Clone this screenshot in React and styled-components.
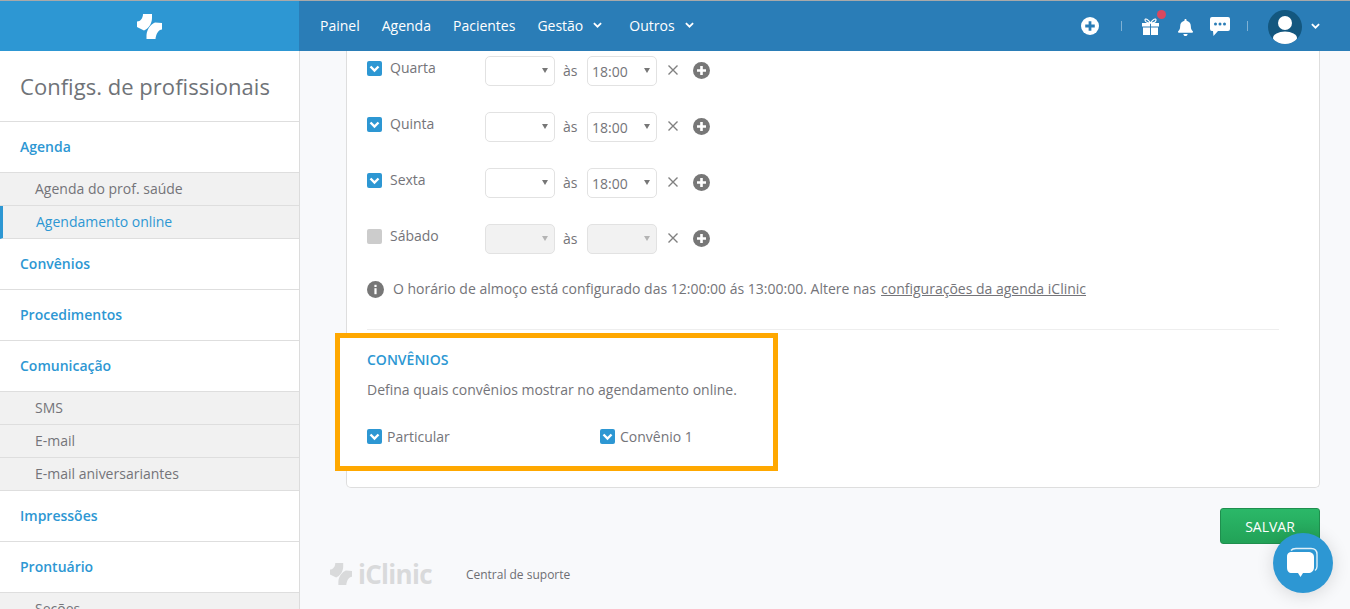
import React from "react";
import styled, { createGlobalStyle } from "styled-components";
import { FaBell } from "react-icons/fa";

const GlobalStyle = createGlobalStyle`
  html, body {
    margin: 0;
    padding: 0;
    height: 100%;
    overflow: hidden;
    background: #f8f9fb;
    font-family: "Open Sans", "Liberation Sans", sans-serif;
    color: #747479;
  }
  * {
    box-sizing: border-box;
  }
`;

const Page = styled.div`
  display: flex;
  flex-direction: column;
  height: 609px;
  overflow: hidden;
`;

const Header = styled.header`
  display: flex;
  flex: none;
  height: 51px;
  border-top: 1px solid #a9a9a9;
  background: #2a7db7;
`;

const Brand = styled.div`
  display: flex;
  align-items: center;
  justify-content: center;
  width: 299px;
  background: #2d97d3;
`;

const Nav = styled.nav`
  display: flex;
  align-items: center;
  gap: 22px;
  flex: 1;
  padding: 0 0 2px 21px;
`;

const NavItem = styled.a`
  display: flex;
  align-items: center;
  gap: 10px;
  color: #fff;
  font-size: 14px;
  margin-right: ${(props) => (props.$menu ? "5px" : "0")};
`;

const Tools = styled.div`
  display: flex;
  align-items: center;
  padding-right: 30px;
`;

const Sep = styled.span`
  width: 1px;
  height: 10px;
  background: rgba(255, 255, 255, 0.4);
  margin: ${(props) => props.$space};
`;

const GiftWrap = styled.span`
  position: relative;
  display: flex;
`;

const Dot = styled.span`
  position: absolute;
  top: -8px;
  right: -6.5px;
  width: 9px;
  height: 9px;
  border-radius: 50%;
  background: #d9485f;
`;

const BellWrap = styled.span`
  display: flex;
  margin: 2px 16px 0 18px;
`;

const Avatar = styled.span`
  display: flex;
  width: 34px;
  height: 34px;
  margin: 2px 9px 0 20px;
`;

const Body = styled.div`
  display: flex;
  flex: 1;
  min-height: 0;
`;

const Sidebar = styled.aside`
  flex: none;
  width: 300px;
  background: #fff;
  border-right: 1px solid #dcdcdc;
  overflow: hidden;
`;

const SideTitle = styled.h1`
  margin: 0;
  height: 71px;
  padding: 20px 20px 0;
  font-size: 22px;
  line-height: 30px;
  font-weight: 400;
  letter-spacing: 0.03px;
  color: #6f7378;
  border-bottom: 1px solid #dedede;
`;

const SideGroup = styled.div`
  display: flex;
  align-items: center;
  height: 51px;
  padding-left: 20px;
  padding-bottom: 1px;
  font-size: 14px;
  font-weight: 600;
  color: #2d97d3;
  border-bottom: 1px solid #dedede;
`;

const SideItem = styled.div`
  display: flex;
  align-items: center;
  height: 33px;
  padding-left: ${(props) => (props.$active ? "33px" : "35px")};
  padding-bottom: 2px;
  font-size: 14px;
  color: ${(props) => (props.$active ? "#2d97d3" : "#747479")};
  background: #f1f1f1;
  border-bottom: 1px solid #dedede;
  border-left: ${(props) => (props.$active ? "3px solid #2d97d3" : "0")};
`;

const Main = styled.main`
  flex: 1;
  min-width: 0;
  padding: 0 30px 0 46px;
  background: #f8f9fb;
`;

const Card = styled.section`
  height: 437px;
  padding: 5px 40px 0 20px;
  background: #fff;
  border: 1px solid #dedede;
  border-top: 0;
  border-radius: 0 0 5px 5px;
`;

const DayRow = styled.div`
  display: flex;
  align-items: flex-start;
  height: 56px;
`;

const DayCheck = styled.label`
  display: flex;
  align-items: center;
  gap: 8px;
  width: 118px;
  height: 22px;
  font-size: 14px;
`;

const Box = styled.span`
  display: flex;
  align-items: center;
  justify-content: center;
  flex: none;
  width: 15px;
  height: 15px;
  margin-top: ${(props) => props.$nudge || "0"};
  border-radius: 2px;
  background: ${(props) => (props.$off ? "#cccccc" : "#2d97d3")};
`;

const Select = styled.div`
  display: flex;
  align-items: center;
  justify-content: space-between;
  width: 70px;
  height: 30px;
  padding: 0 6px 0 4px;
  font-size: 14px;
  border: 1px solid #e2e2e2;
  border-radius: 5px;
  background: ${(props) => (props.$off ? "#f2f2f2" : "#fff")};
  color: #747479;

  &::after {
    content: "";
    margin-top: -1px;
    margin-left: auto;
    border-top: 5px solid ${(props) => (props.$off ? "#b4b4b4" : "#777")};
    border-left: 3px solid transparent;
    border-right: 3px solid transparent;
  }
`;

const As = styled.span`
  width: 32px;
  height: 30px;
  padding-left: 8px;
  line-height: 30px;
  font-size: 14px;
`;

const RowActions = styled.div`
  display: flex;
  align-items: center;
  gap: 14px;
  height: 28px;
  margin-left: 10px;
`;

const Note = styled.p`
  display: flex;
  align-items: center;
  gap: 9px;
  margin: -4px 0 0;
  height: 24px;
  font-size: 14px;
`;

const InfoIcon = styled.svg`
  flex: none;
  margin-top: 2px;
`;

const NoteLink = styled.a`
  margin-left: -4px;
  text-decoration: underline;
`;

const Divider = styled.hr`
  margin: 29px 0 0;
  border: 0;
  border-top: 1px solid #eeeeee;
`;

const Plans = styled.div`
  position: relative;
  padding-top: 20px;
`;

const Highlight = styled.div`
  position: absolute;
  top: 3px;
  left: -32px;
  width: 443px;
  height: 138px;
  background: #fff;
  border: 5px solid #ffa800;
`;

const PlansTitle = styled.h2`
  position: relative;
  margin: 0;
  font-size: 14px;
  line-height: 19px;
  font-weight: 600;
  color: #2d97d3;
`;

const PlansText = styled.p`
  position: relative;
  margin: 11px 0 0;
  font-size: 14px;
  line-height: 19px;
`;

const PlansGrid = styled.div`
  position: relative;
  display: grid;
  grid-template-columns: 233px 200px;
  margin-top: 28px;
`;

const PlanCheck = styled.label`
  display: flex;
  align-items: center;
  gap: 5px;
  font-size: 14px;
  line-height: 19px;
`;

const Actions = styled.div`
  display: flex;
  justify-content: flex-end;
  margin-top: 20px;
`;

const SaveButton = styled.button`
  width: 100px;
  height: 36px;
  padding: 0;
  font-family: inherit;
  font-size: 14px;
  color: #fff;
  background: linear-gradient(#2bb868, #22a257);
  border: 1px solid #1f8f4e;
  border-radius: 3px;
`;

const Footer = styled.footer`
  display: flex;
  align-items: center;
  gap: 34px;
  margin-top: 8px;
  margin-left: -16px;
  height: 44px;
`;

const FooterBrand = styled.span`
  display: flex;
  align-items: center;
  gap: 6px;
  font-size: 26px;
  font-weight: 700;
  letter-spacing: -0.7px;
  color: #d9dadb;
`;

const FooterLink = styled.a`
  font-size: 12px;
  color: #6e6e73;
`;

const ChatBubble = styled.button`
  position: fixed;
  left: 1273px;
  top: 533px;
  display: flex;
  align-items: center;
  justify-content: center;
  width: 60px;
  height: 60px;
  padding: 0;
  border: 0;
  border-radius: 50%;
  background: #2d97d3;
  box-shadow: 0 2px 18px rgba(0, 0, 0, 0.14);
`;

const Logo = ({ size, color }) => (
  <svg width={size} height={size} viewBox="0 0 25 25" fill={color}>
    <path d="M6 0H15V4C15 10 11 15 7 16.500L0 13V7.500C3.500 7.500 6 4 6 0Z" />
    <path d="M25 9V15.500C21.500 15.500 19 20 18.500 25H9.500V21C10 15 14 10 18 8.500Z" />
  </svg>
);

const Check = () => (
  <svg width="11" height="9" viewBox="0 0 11 9" fill="none">
    <path d="M1.500 2.500l4 4 4-4" stroke="#fff" strokeWidth="2.400" />
  </svg>
);

const Chevron = ({ size = 9 }) => (
  <svg width={size} height={size * 0.7} viewBox="0 0 10 7" fill="none">
    <path d="M1 1.200l4 4 4-4" stroke="#fff" strokeWidth="2" />
  </svg>
);

const Cross = () => (
  <svg width="12" height="12" viewBox="0 0 12 12" fill="none">
    <path d="M1.500 1.500l9 9M10.500 1.500l-9 9" stroke="#808080" strokeWidth="1.400" />
  </svg>
);

const PlusCircle = ({ size = 17, bg = "#777", fg = "#fff" }) => (
  <svg width={size} height={size} viewBox="0 0 17 17">
    <circle cx="8.500" cy="8.500" r="8.500" fill={bg} />
    <path d="M8.500 4v9M4 8.500h9" stroke={fg} strokeWidth="2.600" />
  </svg>
);

const InfoCircle = () => (
  <InfoIcon width="17" height="17" viewBox="0 0 17 17">
    <circle cx="8.500" cy="8.500" r="8.500" fill="#777" />
    <rect x="7.400" y="7.200" width="2.200" height="6" fill="#fff" />
    <rect x="7.400" y="3.800" width="2.200" height="2.200" fill="#fff" />
  </InfoIcon>
);

const GiftIcon = () => (
  <svg width="17" height="17" viewBox="0 0 17 17" fill="#fff">
    <path
      d="M8.500 5C6 1 3 0 3 2C3 4 6 5 8.500 5C11 5 14 4 14 2C14 0 11 1 8.500 5Z"
      fill="none"
      stroke="#fff"
      strokeWidth="1.200"
    />
    <rect x="0" y="5" width="8" height="3.500" />
    <rect x="9" y="5" width="8" height="3.500" />
    <rect x="1" y="9.500" width="7" height="7.500" />
    <rect x="9" y="9.500" width="7" height="7.500" />
  </svg>
);

const MessageIcon = () => (
  <svg width="20" height="19" viewBox="0 0 20 19">
    <path d="M2 0h16a2 2 0 0 1 2 2v10a2 2 0 0 1-2 2H8l-4.500 5L3 14H2a2 2 0 0 1-2-2V2a2 2 0 0 1 2-2z" fill="#fff" />
    <circle cx="5.500" cy="7" r="1.500" fill="#2a7db7" />
    <circle cx="10" cy="7" r="1.500" fill="#2a7db7" />
    <circle cx="14.500" cy="7" r="1.500" fill="#2a7db7" />
  </svg>
);

const UserAvatar = () => (
  <svg width="34" height="34" viewBox="0 0 34 34">
    <clipPath id="avatar-clip">
      <circle cx="17" cy="17" r="17" />
    </clipPath>
    <circle cx="17" cy="17" r="17" fill="#13577f" />
    <g clipPath="url(#avatar-clip)" fill="#fff">
      <circle cx="17" cy="13" r="7" />
      <ellipse cx="17" cy="28" rx="12" ry="6.500" />
    </g>
  </svg>
);

const ChatIcon = () => (
  <svg width="34" height="32" viewBox="0 0 34 32">
    <path
      d="M5 3.500C6 2 8 1.500 10 1.500h15c4 0 6 2 6 6v12c0 2-.5 3-2 4"
      fill="none"
      stroke="#fff"
      strokeWidth="1.400"
      opacity="0.85"
    />
    <path d="M6 5h16c3.500 0 6 1.500 6 5v10c0 4-2.500 6-6 6h-5l-2.500 4-2.500-4H6c-3.500 0-5-2-5-6V10c0-3.500 1.500-5 5-5z" fill="#fff" />
  </svg>
);

const days = [
  { name: "Quarta", end: "18:00" },
  { name: "Quinta", end: "18:00" },
  { name: "Sexta", end: "18:00" },
  { name: "Sábado", off: true },
];

const App = () => {
  return (
    <Page>
      <GlobalStyle />
      <Header>
        <Brand>
          <Logo size={25} color="#fff" />
        </Brand>
        <Nav>
          <NavItem>Painel</NavItem>
          <NavItem>Agenda</NavItem>
          <NavItem>Pacientes</NavItem>
          <NavItem $menu>
            Gestão <Chevron />
          </NavItem>
          <NavItem $menu>
            Outros <Chevron />
          </NavItem>
        </Nav>
        <Tools>
          <PlusCircle size={18} bg="#fff" fg="#2a7db7" />
          <Sep $space="0 20px 0 22px" />
          <GiftWrap>
            <GiftIcon />
            <Dot />
          </GiftWrap>
          <BellWrap>
            <FaBell size={17} color="#fff" />
          </BellWrap>
          <MessageIcon />
          <Sep $space="0 0 0 17px" />
          <Avatar>
            <UserAvatar />
          </Avatar>
          <Chevron />
        </Tools>
      </Header>
      <Body>
        <Sidebar>
          <SideTitle>Configs. de profissionais</SideTitle>
          <SideGroup>Agenda</SideGroup>
          <SideItem>Agenda do prof. saúde</SideItem>
          <SideItem $active>Agendamento online</SideItem>
          <SideGroup>Convênios</SideGroup>
          <SideGroup>Procedimentos</SideGroup>
          <SideGroup>Comunicação</SideGroup>
          <SideItem>SMS</SideItem>
          <SideItem>E-mail</SideItem>
          <SideItem>E-mail aniversariantes</SideItem>
          <SideGroup>Impressões</SideGroup>
          <SideGroup>Prontuário</SideGroup>
          <SideItem>Seções</SideItem>
        </Sidebar>
        <Main>
          <Card>
            {days.map((day) => (
              <DayRow key={day.name}>
                <DayCheck>
                  <Box $off={day.off} $nudge="2px">
                    {!day.off && <Check />}
                  </Box>
                  {day.name}
                </DayCheck>
                <Select $off={day.off} />
                <As>às</As>
                <Select $off={day.off}>{day.end}</Select>
                <RowActions>
                  <Cross />
                  <PlusCircle />
                </RowActions>
              </DayRow>
            ))}
            <Note>
              <InfoCircle />
              O horário de almoço está configurado das 12:00:00 ás 13:00:00. Altere nas{" "}
              <NoteLink>configurações da agenda iClinic</NoteLink>
            </Note>
            <Divider />
            <Plans>
              <Highlight />
              <PlansTitle>CONVÊNIOS</PlansTitle>
              <PlansText>Defina quais convênios mostrar no agendamento online.</PlansText>
              <PlansGrid>
                <PlanCheck>
                  <Box>
                    <Check />
                  </Box>
                  Particular
                </PlanCheck>
                <PlanCheck>
                  <Box>
                    <Check />
                  </Box>
                  Convênio 1
                </PlanCheck>
              </PlansGrid>
            </Plans>
          </Card>
          <Actions>
            <SaveButton>SALVAR</SaveButton>
          </Actions>
          <Footer>
            <FooterBrand>
              <Logo size={22} color="#d9dadb" />
              iClinic
            </FooterBrand>
            <FooterLink>Central de suporte</FooterLink>
          </Footer>
        </Main>
      </Body>
      <ChatBubble>
        <ChatIcon />
      </ChatBubble>
    </Page>
  );
};

export default App;
